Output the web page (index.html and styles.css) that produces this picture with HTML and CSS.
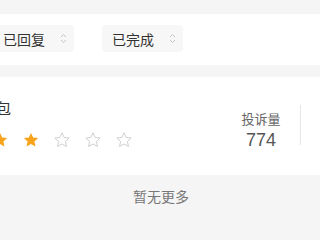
FILE: index.html
```html
<!DOCTYPE html>
<html lang="zh">
<head>
<meta charset="utf-8">
<link rel="stylesheet" href="styles.css">
</head>
<body>
<div class="page">
  <div class="filters">
    <div class="select first">
      <span class="label">已回复</span>
      <svg class="arrows" width="7" height="11" viewBox="0 0 7 11"><path d="M1 4 L3.5 1.5 L6 4 M1 7 L3.5 9.5 L6 7" fill="none" stroke="#c4c4c4" stroke-width="1"/></svg>
    </div>
    <div class="select">
      <span class="label">已完成</span>
      <svg class="arrows" width="7" height="11" viewBox="0 0 7 11"><path d="M1 4 L3.5 1.5 L6 4 M1 7 L3.5 9.5 L6 7" fill="none" stroke="#c4c4c4" stroke-width="1"/></svg>
    </div>
  </div>

  <div class="card">
    <div class="info">
      <div class="title">包</div>
      <div class="stars">
        <svg class="star" viewBox="0 0 24 24"><path class="on" d="M12 2.5l2.9 6.1 6.6.8-4.9 4.6 1.3 6.6L12 17.3l-5.9 3.3 1.3-6.6-4.9-4.6 6.6-.8z"/></svg>
        <svg class="star" viewBox="0 0 24 24"><path class="on" d="M12 2.5l2.9 6.1 6.6.8-4.9 4.6 1.3 6.6L12 17.3l-5.9 3.3 1.3-6.6-4.9-4.6 6.6-.8z"/></svg>
        <svg class="star" viewBox="0 0 24 24"><path class="off" d="M12 2.5l2.9 6.1 6.6.8-4.9 4.6 1.3 6.6L12 17.3l-5.9 3.3 1.3-6.6-4.9-4.6 6.6-.8z"/></svg>
        <svg class="star" viewBox="0 0 24 24"><path class="off" d="M12 2.5l2.9 6.1 6.6.8-4.9 4.6 1.3 6.6L12 17.3l-5.9 3.3 1.3-6.6-4.9-4.6 6.6-.8z"/></svg>
        <svg class="star" viewBox="0 0 24 24"><path class="off" d="M12 2.5l2.9 6.1 6.6.8-4.9 4.6 1.3 6.6L12 17.3l-5.9 3.3 1.3-6.6-4.9-4.6 6.6-.8z"/></svg>
      </div>
    </div>
    <div class="stat">
      <div class="stat-label">投诉量</div>
      <div class="stat-value">774</div>
    </div>
    <div class="divider"></div>
  </div>

  <div class="more">暂无更多</div>
</div>
</body>
</html>
```

FILE: styles.css
```css
* { box-sizing: border-box; }
html, body {
  margin: 0;
  padding: 0;
  background: #f5f5f5;
  font-family: "Noto Sans CJK SC", "Noto Sans", sans-serif;
  overflow: hidden;
}
.page {
  width: 320px;
  height: 240px;
  overflow: hidden;
  padding-top: 14px;
}
.filters {
  background: #fff;
  height: 51px;
  display: flex;
  align-items: center;
  gap: 28px;
  margin-left: -7px;
  padding-bottom: 2px;
}
.select {
  width: 81px;
  height: 27px;
  background: #f7f7f7;
  border-radius: 4px;
  display: flex;
  align-items: center;
  padding-left: 10px;
  color: #333;
  font-size: 14px;
}
.select .label {
  width: 42px;
  line-height: 20px;
}
.select .arrows {
  margin-left: 15px;
  display: block;
}
.card {
  margin-top: 12px;
  background: #fff;
  height: 98px;
  display: flex;
  align-items: flex-start;
}
.info {
  flex: 1;
  padding-top: 20px;
  margin-left: -4px;
}
.title {
  font-size: 15px;
  line-height: 21px;
  color: #333;
}
.stars {
  margin-top: 13px;
  margin-left: -5px;
  display: flex;
  gap: 13px;
}
.star {
  width: 18px;
  height: 18px;
  display: block;
}
.star .on { fill: #f7a31c; }
.star .off { fill: none; stroke: #c9c9c9; stroke-width: 1.2; stroke-linejoin: round; }
.stat {
  width: 60px;
  margin-top: 33px;
  text-align: center;
  margin-right: 9px;
}
.stat-label {
  font-size: 13px;
  line-height: 18px;
  color: #666;
}
.stat-value {
  margin-top: 2px;
  font-size: 18px;
  line-height: 20px;
  color: #555;
  font-family: "Liberation Sans", "Noto Sans", sans-serif;
}
.divider {
  width: 1px;
  height: 40px;
  margin-top: 28px;
  background: #e6e6e6;
  margin-right: 19px;
}
.more {
  padding-top: 11px;
  text-align: center;
  font-size: 14px;
  line-height: 20px;
  color: #777;
  padding-left: 2px;
}
```
